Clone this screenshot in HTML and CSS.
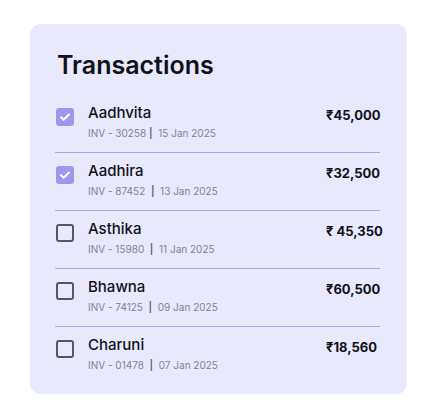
FILE: index.html
```html
<!DOCTYPE html>
<html>
<head>
<meta charset="utf-8">
<link rel="stylesheet" href="styles.css">
</head>
<body>
<div class="card">
  <h1 class="title">Transactions</h1>
  <ul class="list">
    <li class="row">
      <span class="box checked"><svg viewBox="0 0 18 18" width="18" height="18"><path d="M5 9.3l2.6 2.5L13 6.5" fill="none" stroke="#fff" stroke-width="2" stroke-linecap="round" stroke-linejoin="round"/></svg></span>
      <div class="info"><div class="name">Aadhvita</div><div class="sub">INV - 30258 <span class="sep">|</span>&nbsp; 15 Jan 2025</div></div>
      <div class="amt">₹45,000</div>
    </li>
    <li class="row">
      <span class="box checked"><svg viewBox="0 0 18 18" width="18" height="18"><path d="M5 9.3l2.6 2.5L13 6.5" fill="none" stroke="#fff" stroke-width="2" stroke-linecap="round" stroke-linejoin="round"/></svg></span>
      <div class="info"><div class="name">Aadhira</div><div class="sub">INV - 87452 &nbsp;<span class="sep">|</span>&nbsp; 13 Jan 2025</div></div>
      <div class="amt">₹32,500</div>
    </li>
    <li class="row">
      <span class="box"></span>
      <div class="info"><div class="name">Asthika</div><div class="sub">INV - 15980 &nbsp;<span class="sep">|</span>&nbsp; 11 Jan 2025</div></div>
      <div class="amt">₹ 45,350</div>
    </li>
    <li class="row">
      <span class="box"></span>
      <div class="info"><div class="name">Bhawna</div><div class="sub">INV - 74125 &nbsp;<span class="sep">|</span>&nbsp; 09 Jan 2025</div></div>
      <div class="amt">₹60,500</div>
    </li>
    <li class="row">
      <span class="box"></span>
      <div class="info"><div class="name">Charuni</div><div class="sub">INV - 01478 &nbsp;<span class="sep">|</span>&nbsp; 07 Jan 2025</div></div>
      <div class="amt">₹18,560</div>
    </li>
  </ul>
</div>
</body>
</html>
```
FILE: styles.css
```css
* { box-sizing: border-box; }
html, body { margin: 0; padding: 0; background: #ffffff; }
body {
  font-family: Inter, "Noto Sans", sans-serif;
  color: #111118;
  padding: 24px 30px 0 30px;
}
.card {
  width: 377px;
  background: #e9e9fd;
  border-radius: 11px;
  padding: 25px 27px 10px 25px;
}
.title {
  margin: 0;
  font-size: 25px;
  line-height: 32px;
  font-weight: 600;
  padding-left: 2px;
}
.list {
  list-style: none;
  margin: 14px 0 0 0;
  padding: 0;
}
.row {
  display: grid;
  grid-template-columns: 18px 1fr 54px;
  column-gap: 14px;
  padding: 8px 0 12px 1px;
  border-bottom: 1px solid #aaa7e6;
}
.row:last-child { border-bottom: none; }
.box {
  width: 18px;
  height: 18px;
  margin-top: 5px;
  border: 2px solid #56565f;
  border-radius: 3px;
  display: block;
}
.box.checked {
  border: none;
  background: #9d98ec;
}
.box svg { display: block; }
.name {
  font-size: 15px;
  line-height: 20px;
  font-weight: 500;
}
.sub {
  margin-top: 3px;
  font-size: 10px;
  line-height: 14px;
  color: #83838f;
}
.sep { color: #5f5f6a; font-weight: 600; }
.amt {
  font-size: 13px;
  line-height: 20px;
  font-weight: 700;
  margin-top: 2px;
  white-space: nowrap;
}
```
